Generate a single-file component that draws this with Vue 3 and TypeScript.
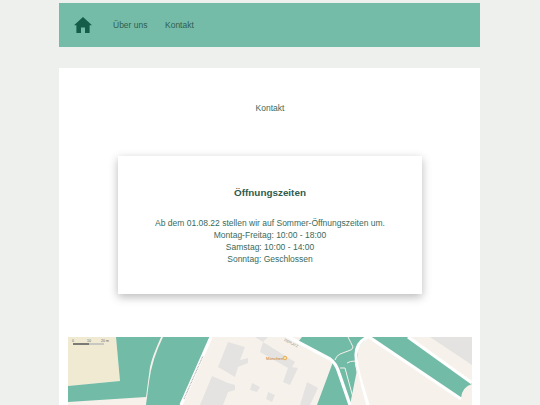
<template>
  <div class="page">
    <nav class="navbar">
      <a class="home" aria-label="Home">
        <svg viewBox="0 0 18 16" width="18" height="16">
          <path d="M9 0 L18 8.3 L15.6 8.3 L15.6 16 L11 16 L11 10.5 L7 10.5 L7 16 L2.4 16 L2.4 8.3 L0 8.3 Z" />
        </svg>
      </a>
      <a v-for="link in links" :key="link" class="nav-link">{{ link }}</a>
    </nav>

    <main class="content">
      <p class="intro">Kontakt</p>

      <section class="card">
        <h2>Öffnungszeiten</h2>
        <p v-for="line in hours" :key="line">{{ line }}</p>
      </section>

      <div class="map">
        <svg viewBox="0 0 404 68" width="404" height="68">
          <rect class="land" width="404" height="68" />
          <path class="tan" d="M0 0 L48 0 L52 44 L0 49 Z" />
          <path class="park" d="M48 0 L93 0 Q84 20 82 30 L78 60 L0 65 L0 49 L52 44 Z" />
          <path class="park" d="M95 0 L142 0 L112 68 L78 68 L81 45 Q84 22 95 0 Z" />
          <path class="road" d="M143 0 L113 68" />

          <path v-for="(shape, i) in buildings" :key="i" class="building" :d="shape" />

          <path class="park" d="M230 5 L234 0 L300 0 L290 10 L290 28 L282 68 L249 68 L265 25 Z" />
          <path class="park" d="M302 0 L340 0 L404 46 L404 47 Q394 50 393 61 Z" />
          <path class="grey" d="M362 0 L404 0 L404 28 Z" />

          <path class="road" d="M215 -3 L262 22 Q268 26 271 36 L282 68" />
          <path class="road" d="M300 0 Q288 5 288 18 Q288 28 291 38 L300 68" />
          <path class="road" d="M301 0 L393 62" />
          <path class="road" d="M340 0 L404 46" />
          <path class="path" d="M280 0 Q283 6 285 10 Q285 13 280 14 L272 17 Q268 19 267 23" />
          <path class="path" d="M272 31 L277 31 L287 68" />
          <path class="path" d="M279 26 Q282 24 287 24 L297 68" />

          <path class="scale" d="M5 7 L21 7" />
          <path class="scale-rest" d="M21 7 L36 7" />
          <text class="scale-label" x="5" y="5">0</text>
          <text class="scale-label" x="21" y="5">10</text>
          <text class="scale-label" x="37" y="5">20 m</text>

          <path class="street-label" d="M116 62 L135 19" />
          <text class="poi" x="198" y="22.5">Mönchen</text>
          <circle class="poi-dot" cx="217" cy="21" r="1.8" />
          <text class="street" transform="translate(216 3.5) rotate(28)">DEPLATZ</text>
        </svg>
      </div>
    </main>
  </div>
</template>

<script setup lang="ts">
const links: string[] = ["Über uns", "Kontakt"];

const hours: string[] = [
  "Ab dem 01.08.22 stellen wir auf Sommer-Öffnungszeiten um.",
  "Montag-Freitag: 10:00 - 18:00",
  "Samstag: 10:00 - 14:00",
  "Sonntag: Geschlossen",
];

const buildings: string[] = [
  "M160 5 L177 10 L172 23 L180 21 L180 26 L170 30 L167 40 L150 30 Z",
  "M144 39 L160 46 L167 48 L167 53 L160 55 L155 68 L132 68 Z",
  "M184 46 L192 50 L189 55 L182 53 Z",
  "M200 55 L207 58 L204 65 L198 62 Z",
  "M195 5 L227 25 L224 30 L230 31 L222 48 L215 45 L220 31 L192 15 Z",
  "M187 0 L200 0 L195 5 Z",
  "M239 45 L250 51 L242 68 L232 68 Z",
];
</script>

<style>
html,
body {
  margin: 0;
  height: 100%;
  overflow: hidden;
  background: #eef0ee;
}
</style>

<style scoped>
.page {
  width: 421px;
  margin-left: 59px;
  padding-top: 3px;
  font-family: "Liberation Sans", Arial, sans-serif;
  color: #3a6a5b;
  font-size: 8.5px;
}

.navbar {
  height: 44px;
  display: flex;
  align-items: center;
  padding-left: 15px;
  background: #74bca8;
}

.home {
  display: flex;
  margin-right: 21px;
}

.home svg {
  fill: #155c49;
}

.nav-link {
  margin-right: 17.5px;
  color: #2f5f50;
}

.content {
  margin-top: 21px;
  height: 340px;
  padding: 0 8px 0 9px;
  background: #fff;
  overflow: hidden;
}

.intro {
  margin: 35px 0 0;
  line-height: 11px;
  text-align: center;
}

.card {
  width: 304px;
  height: 138px;
  box-sizing: border-box;
  margin: 42px auto 0 50px;
  padding-top: 30px;
  text-align: center;
  line-height: 12px;
  background: #fff;
  box-shadow: 0 3px 9px rgba(0, 0, 0, 0.28);
}

.card h2 {
  margin: 0 0 18px;
  font-size: 9.9px;
  line-height: 13px;
  color: #2f5b4e;
}

.card p {
  margin: 0;
}

.map {
  margin-top: 43px;
  height: 68px;
}

.map svg {
  display: block;
}

.land {
  fill: #f6f2eb;
}

.tan {
  fill: #f1ead3;
}

.park {
  fill: #72bba7;
}

.building,
.grey {
  fill: #e4e3e1;
}

.road {
  fill: none;
  stroke: #fff;
  stroke-width: 3.2;
}

.path {
  fill: none;
  stroke: #f6f2eb;
  stroke-width: 1;
}

.scale {
  stroke: #555;
  stroke-width: 1.5;
}

.scale-rest {
  stroke: #bbb;
  stroke-width: 1.5;
}

.scale-label {
  font-size: 3.6px;
  fill: #666;
  text-anchor: middle;
}

.street-label {
  stroke: #b9b8b4;
  stroke-width: 1.2;
  stroke-dasharray: 1 0.6;
}

.street {
  font-size: 3.4px;
  fill: #8d8c88;
}

.poi {
  font-size: 4.2px;
  fill: #c9772a;
}

.poi-dot {
  fill: #f6e2a8;
  stroke: #e9a23c;
  stroke-width: 0.8;
}
</style>
